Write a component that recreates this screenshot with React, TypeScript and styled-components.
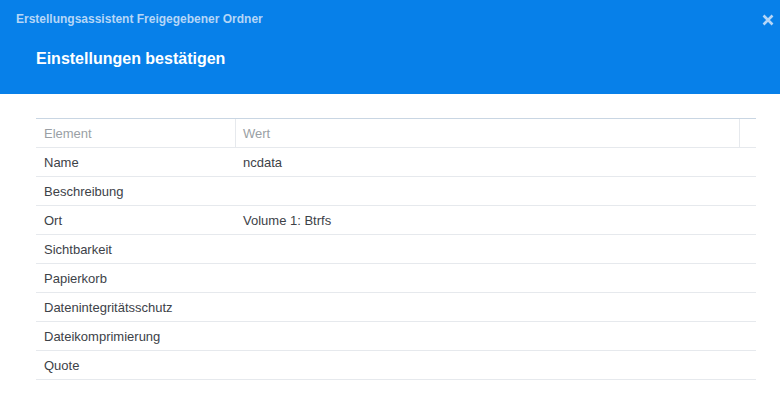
import styled, { createGlobalStyle } from "styled-components";

const GlobalStyle = createGlobalStyle`
    html, body {
        margin: 0;
        padding: 0;
        background: #ffffff;
        font-family: "Liberation Sans", Arial, sans-serif;
    }
`;

const Dialog = styled.div`
    width: 780px;
    height: 407px;
    background: #ffffff;
    overflow: hidden;
`;

const Header = styled.header`
    background-color: #0780e9;
    height: 94px;
    display: flex;
    flex-direction: column;
    position: relative;
`;

const WizardTitle = styled.div`
    font-size: 12px;
    font-weight: bold;
    color: #b5d6f7;
    padding: 12px 0 0 16px;
    line-height: 14px;
`;

const CloseBtn = styled.div`
    position: absolute;
    top: 12px;
    right: 6px;
    width: 12px;
    height: 12px;
    cursor: pointer;
`;

const StepTitle = styled.h1`
    margin: 0;
    font-size: 16px;
    font-weight: bold;
    color: #ffffff;
    padding: 24px 0 0 36px;
    line-height: 18px;
`;

const Body = styled.main`
    padding: 24px 24px 0 36px;
`;

const Table = styled.div`
    border-top: 1px solid #c9d6e3;
    display: flex;
    flex-direction: column;
`;

const Row = styled.div`
    display: grid;
    grid-template-columns: 200px 1fr 16px;
    height: 28px;
    border-bottom: 1px solid #e6e9ed;
    align-items: center;
`;

const Cell = styled.div<{ head?: boolean; divider?: boolean }>`
    font-size: 13px;
    color: ${(p) => (p.head ? "#9a9fa5" : "#3d4248")};
    padding-left: 8px;
    height: 100%;
    display: flex;
    align-items: center;
    border-right: ${(p) => (p.divider ? "1px solid #e6e9ed" : "none")};
`;

const ValueCell = styled(Cell)`
    padding-left: 7px;
`;

const rows: [string, string][] = [
    ["Name", "ncdata"],
    ["Beschreibung", ""],
    ["Ort", "Volume 1: Btrfs"],
    ["Sichtbarkeit", ""],
    ["Papierkorb", ""],
    ["Datenintegritätsschutz", ""],
    ["Dateikomprimierung", ""],
    ["Quote", ""],
];

function App() {
    return (
        <Dialog>
            <GlobalStyle />
            <Header>
                <WizardTitle>Erstellungsassistent Freigegebener Ordner</WizardTitle>
                <CloseBtn>
                    <svg width="12" height="12" viewBox="0 0 12 12">
                        <path d="M1.5 1.5 L10.5 10.5 M10.5 1.5 L1.5 10.5" stroke="#b5d6f7" strokeWidth="2.6" strokeLinecap="butt" />
                    </svg>
                </CloseBtn>
                <StepTitle>Einstellungen bestätigen</StepTitle>
            </Header>
            <Body>
                <Table>
                    <Row>
                        <Cell head divider>Element</Cell>
                        <ValueCell head divider>Wert</ValueCell>
                        <Cell />
                    </Row>
                    {rows.map(([k, v]) => (
                        <Row key={k}>
                            <Cell>{k}</Cell>
                            <ValueCell>{v}</ValueCell>
                            <Cell />
                        </Row>
                    ))}
                </Table>
            </Body>
        </Dialog>
    );
}

export default App;
